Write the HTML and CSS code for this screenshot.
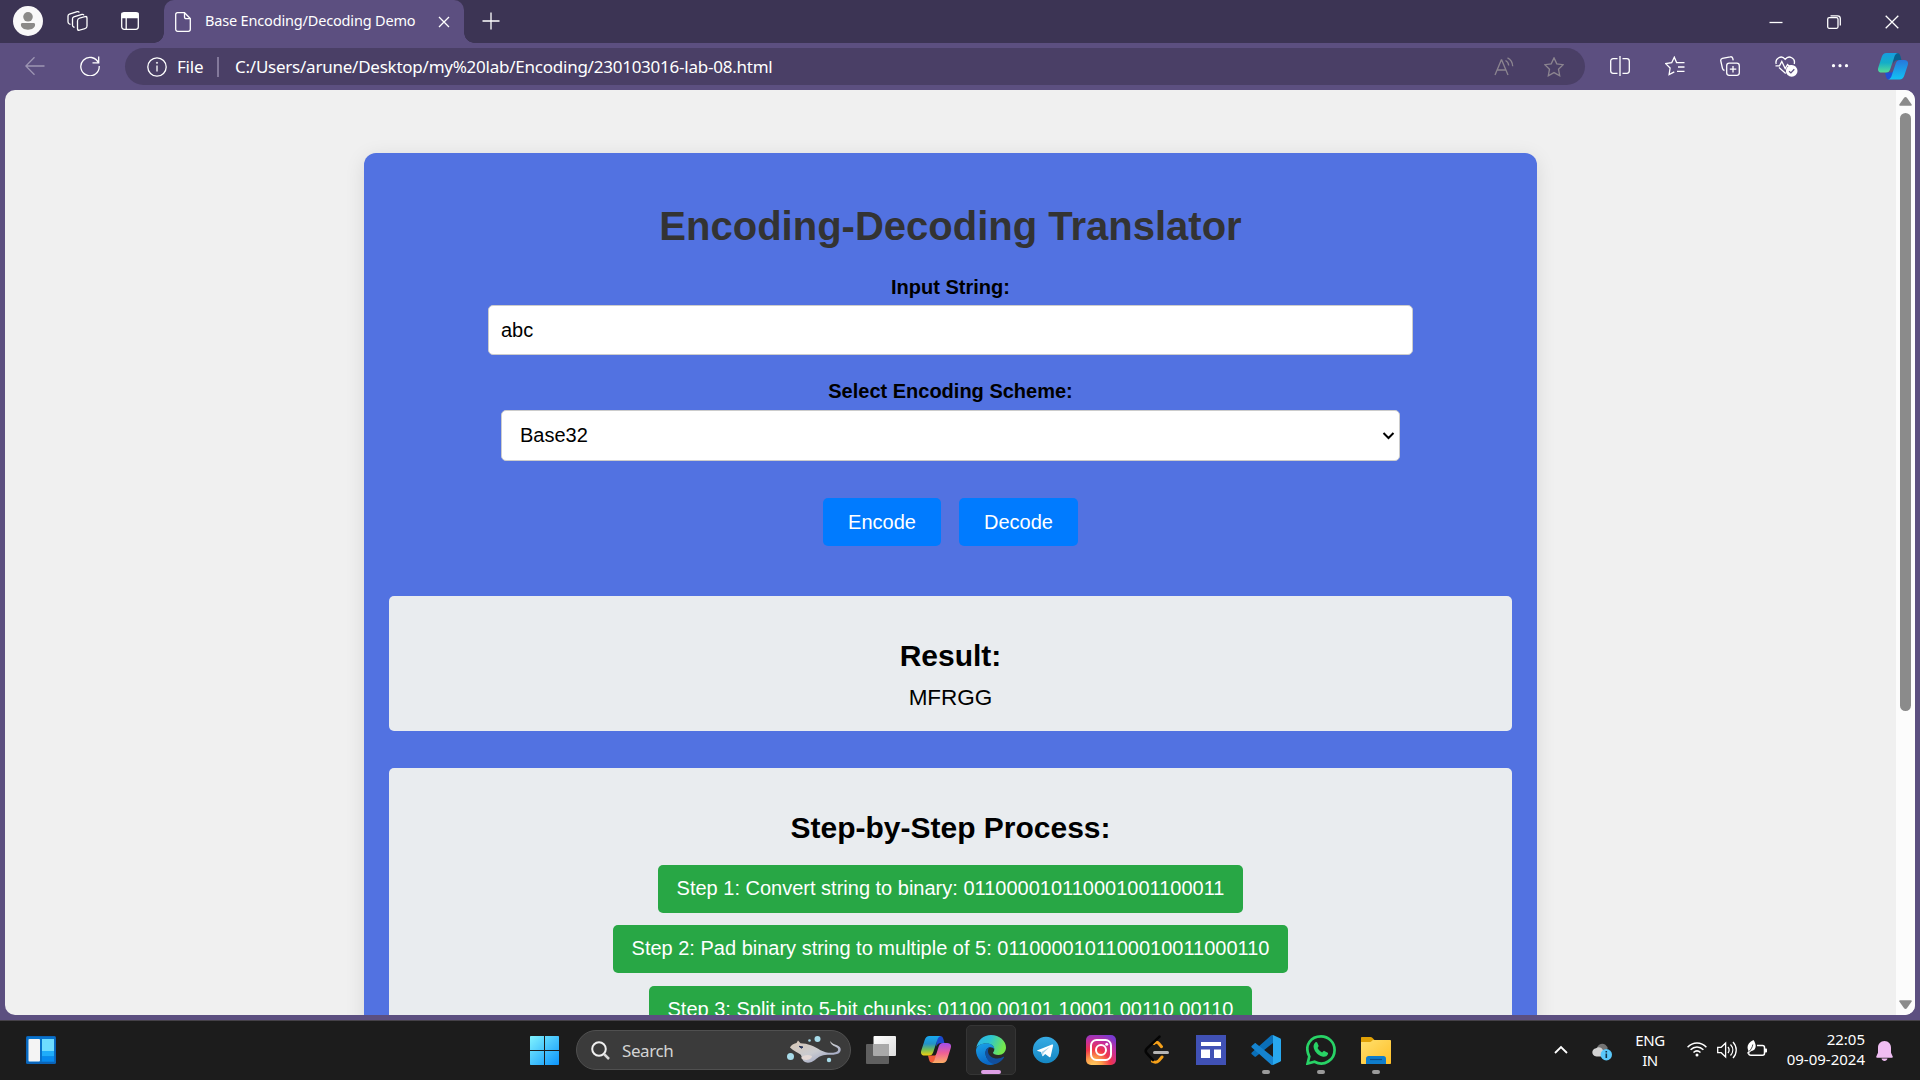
FILE: index.html
```html
<!DOCTYPE html>
<html lang="en">
<head>
<meta charset="utf-8">
<title>Base Encoding/Decoding Demo</title>
<link rel="stylesheet" href="styles.css">
</head>
<body>
<div class="window">
  <header class="tabstrip">
    <div class="strip-tools">
      <svg class="avatar" viewBox="0 0 30 30"><circle cx="15" cy="15" r="15" fill="#f9f8f9"/><circle cx="15" cy="10.8" r="4.8" fill="#8b8988"/><path d="M9.500 17h11c1 0 1.600.6 1.600 1.600 0 3.200-3 5.200-7.100 5.200s-7.100-2-7.100-5.200c0-1 .6-1.600 1.600-1.600z" fill="#8b8988"/></svg>
      <svg class="workspaces line" viewBox="0 0 22 22"><rect x="10.500" y="7.500" width="9.500" height="12" rx="2" transform="skewY(-16) translate(0 4.300)"/><path d="M7.500 17.500l-1-.6c-.8-.4-1-.9-1-1.700V8.700c0-1 .4-1.500 1.300-1.900L15 4.400c1-.3 1.700.1 1.900 1"/><path d="M3.500 14.500l-1.400-.8c-.8-.5-1.100-1-1.100-1.900V6c0-1 .5-1.500 1.400-1.800l7.800-2.500c1-.3 1.700 0 2.100.9"/></svg>
      <svg class="tabactions line" viewBox="0 0 18 18"><rect x=".7" y=".7" width="16.600" height="16.600" rx="2.500"/><path d="M1 1.500h16v4H1z" fill="#fff"/><path d="M5.200 5v12"/></svg>
    </div>
    <div class="tab">
      <svg class="fileicon line" viewBox="0 0 16 20"><path d="M2.500.7h7L15.300 6.600v10.700c0 1.200-.8 2-2 2H2.700c-1.200 0-2-.8-2-2V2.700c0-1.200.6-2 1.800-2z"/><path d="M9.500.9v4.200c0 1 .6 1.600 1.600 1.600h4"/></svg>
      <span class="tab-title">Base Encoding/Decoding Demo</span>
      <svg class="tab-close line" viewBox="0 0 12 12"><path d="M1 1l10 10M11 1L1 11"/></svg>
    </div>
    <svg class="newtab line" viewBox="0 0 18 18"><path d="M9 .5v17M.5 9h17"/></svg>
    <div class="caption">
      <svg viewBox="0 0 14 14" class="line"><path d="M.5 7.500h13"/></svg>
      <svg viewBox="0 0 14 14" class="line"><rect x=".7" y="2.700" width="10.300" height="10.600" rx="1.500"/><path d="M3.500.8h7c1.800 0 2.800 1 2.800 2.800v7"/></svg>
      <svg viewBox="0 0 14 14" class="line"><path d="M.7.7l12.600 12.600M13.300.7L.7 13.300"/></svg>
    </div>
  </header>

  <nav class="toolbar">
    <svg class="back line" viewBox="0 0 20 20"><path d="M19.500 10H1M9.500 1.300L.8 10l8.700 8.700"/></svg>
    <svg class="reload line" viewBox="0 0 20 20"><path d="M18.500 7A9.200 9.200 0 1 0 19.200 10"/><path d="M18.700.5v6.300h-6.200"/></svg>
    <div class="address">
      <svg class="info line" viewBox="0 0 20 20"><circle cx="10" cy="10" r="9.200"/><path d="M10 8.500v6"/><circle cx="10" cy="5.800" r=".6" fill="#fff" stroke-width=".8"/></svg>
      <span class="scheme">File</span>
      <span class="sep"></span>
      <span class="url">C:/Users/arune/Desktop/my%20lab/Encoding/230103016-lab-08.html</span>
      <svg class="read dim" viewBox="0 0 20 20"><path d="M1 18L7.300 3h.4L14 18M3.300 13h8.500"/><path d="M11.500 3.500c2 1 3 2.500 3.200 5M13.500.8c3.500 1.700 5 4.500 5.200 8.500"/></svg>
      <svg class="star dim" viewBox="0 0 20 20"><path d="M10 .9l2.800 5.900 6.400.9-4.700 4.500 1.200 6.500-5.700-3.100-5.700 3.100 1.200-6.500L.8 7.700l6.400-.9z"/></svg>
    </div>
    <div class="tools">
      <svg class="line" viewBox="0 0 20 20"><path d="M7.500 2.700H3.200C1.700 2.700.7 3.700.7 5.200v9.600c0 1.500 1 2.500 2.500 2.500h4.300M12.500 2.700h4.300c1.500 0 2.500 1 2.500 2.500v9.600c0 1.500-1 2.500-2.500 2.500h-4.300M10 0v20"/></svg>
      <svg class="line" viewBox="0 0 20 20"><path d="M11.800 6.600h-.2L9.300 1.200 6.700 6.700.7 7.600l4.400 4.400-1 6.500 5.200-2.700M11.800 6.600h7.700M13 11h6.500M12 15.300h7.500"/></svg>
      <svg class="line" viewBox="0 0 20 20"><rect x="6.700" y="7.200" width="12.600" height="12.100" rx="2.500"/><path d="M13 10v6.500M9.800 13.200h6.500M4.500 14.500c-1.200-.3-1.700-.8-2-2L.8 5c-.3-1.400.2-2.200 1.600-2.600L10.300.8c1.300-.3 2 .2 2.400 1.400l.5 2.200"/></svg>
      <svg class="essentials line" viewBox="0 0 23 21"><path d="M10.700 17.500L4 11.500M1.200 8C-.3 2.500 6.500-1.500 10.200 3.300 14-1.500 20.800 2.500 19.200 8M.5 9.800h4l2.300-4.300 3.400 7 2.300-4 1.300 1.300h3"/><circle cx="16.700" cy="14.900" r="5.800" fill="#fff" stroke="none"/><path d="M14.100 15.200l1.800 1.700 3.400-3.700" stroke="#5c4f80"/></svg>
      <svg class="dots" viewBox="0 0 20 20"><g fill="#fff"><circle cx="3.500" cy="9.700" r="1.600"/><circle cx="10" cy="9.700" r="1.600"/><circle cx="16.500" cy="9.700" r="1.600"/></g></svg>
    </div>
    <svg class="sidepilot" viewBox="0 0 30 27">
      <defs>
        <linearGradient id="cp1" x1="0" y1="0" x2="0" y2="1"><stop offset="0" stop-color="#179ee0"/><stop offset=".5" stop-color="#14aec8"/><stop offset="1" stop-color="#57dd95"/></linearGradient>
        <linearGradient id="cp2" x1="0" y1="0" x2="0" y2="1"><stop offset="0" stop-color="#2877dc"/><stop offset="1" stop-color="#12c3f4"/></linearGradient>
      </defs>
      <path d="M16 0h3c2 0 2.800 1 3.400 3l1 4h-3c-3 0-4.400 1.600-5.400 4z" fill="#08618f"/>
      <path d="M7 19.500h7l3-3-3 7c-.8 2.200-2 3-3.500 3-1.300 0-2-1-2.500-3z" fill="#1e50d8"/>
      <path d="M8.500 0H20c-2.300.4-3 2-3.700 4l-4 12c-.8 2.400-2 3.600-4.300 3.600H4c-3.500 0-4.700-2-3.700-5.200L3.700 4C4.600 1.400 6 0 8.500 0z" fill="url(#cp1)"/>
      <path d="M21.500 26.600H10c2.300-.4 3-2 3.700-4l4-12c.8-2.400 2-3.600 4.300-3.600h4c3.500 0 4.700 2 3.700 5.200l-3.400 10.400c-.9 2.600-2.300 4-4.800 4z" fill="url(#cp2)"/>
    </svg>
  </nav>

  <div class="viewport">
    <main class="page">
      <section class="card">
        <h1>Encoding-Decoding Translator</h1>
        <label for="src">Input String:</label>
        <input id="src" class="field" type="text" value="abc">
        <label class="label-scheme" for="scheme">Select Encoding Scheme:</label>
        <div class="scheme-select">
          <select id="scheme"><option>Base32</option></select>
          <svg viewBox="0 0 13 9"><path d="M1.500 2l5 5 5-5" fill="none" stroke="#000" stroke-width="2"/></svg>
        </div>
        <div class="actions"><button>Encode</button><button>Decode</button></div>
        <div class="panel result">
          <h2>Result:</h2>
          <p>MFRGG</p>
        </div>
        <div class="panel steps">
          <h2>Step-by-Step Process:</h2>
          <div class="step">Step 1: Convert string to binary: 011000010110001001100011</div>
          <div class="step">Step 2: Pad binary string to multiple of 5: 0110000101100010011000110</div>
          <div class="step">Step 3: Split into 5-bit chunks: 01100 00101 10001 00110 00110</div>
        </div>
      </section>
    </main>
    <aside class="scrollbar">
      <svg viewBox="0 0 13 9"><path d="M6.500 0c.6 0 1 .3 1.400.8l4.600 6.400c.6.9.3 1.600-.7 1.600H1.200c-1 0-1.300-.7-.7-1.600L5.100.8C5.500.3 5.900 0 6.500 0z" fill="#8b8b8b"/></svg>
      <span class="thumb"></span>
      <svg class="down" viewBox="0 0 13 9"><path d="M6.500 9c.6 0 1-.3 1.400-.8l4.600-6.400C13.100.9 12.800.2 11.800.2H1.200C.2.200-.1.900.5 1.800l4.600 6.400c.4.500.8.8 1.400.8z" fill="#8b8b8b"/></svg>
    </aside>
  </div>
</div>

<footer class="taskbar">
  <svg class="widgets" viewBox="0 0 30 28">
    <rect width="30" height="28" rx="1.500" fill="#0a64b9"/><rect x="1.500" y="1" width="27" height="25" fill="#0873cc"/>
    <rect x="2.500" y="3" width="11.500" height="22.500" rx="1" fill="#f4f4f4"/><rect x="16" y="3" width="12" height="12" fill="#6edcff"/><rect x="16" y="15" width="12" height="5.500" fill="#1fadfa"/><rect x="16" y="20.500" width="12" height="5" fill="#078aee"/>
  </svg>
  <svg class="start" viewBox="0 0 29 29">
    <defs><linearGradient id="win" x1="0" y1="0" x2="29" y2="29" gradientUnits="userSpaceOnUse"><stop offset="0" stop-color="#80f3fe"/><stop offset="1" stop-color="#0c94fb"/></linearGradient></defs>
    <path d="M1 0h13v14H0V1c0-.6.4-1 1-1zM15 0h13c.6 0 1 .4 1 1v13H15zM0 15h14v14H1c-.6 0-1-.4-1-1zM15 15h14v13c0 .6-.4 1-1 1H15z" fill="url(#win)"/>
  </svg>
  <div class="search">
    <svg class="lens" viewBox="0 0 19 19"><circle cx="8" cy="8" r="6.800" fill="none" stroke="#f0f0f0" stroke-width="2"/><path d="M13 13l5 5" stroke="#d8d8d8" stroke-width="2.500"/></svg>
    <span>Search</span>
    <svg class="critter" viewBox="0 0 56 28">
      <defs><linearGradient id="ray" x1="0" y1="0" x2="1" y2="1"><stop offset="0" stop-color="#d9c7b4"/><stop offset=".5" stop-color="#c9cbd0"/><stop offset="1" stop-color="#8992be"/></linearGradient></defs>
      <path d="M3 11.500c1-2.500 3-3.500 6.500-4.500l1.500-2.500 2.500 2.800c7 .2 14 3 20 7 5 2.500 10 3.200 15 2 3.500-1 3.700-4 0-5.500-3-1-5-3-5.500-5.800 2 2.500 4 3.300 7 4.300 5.500 2 4.500 7.500 0 8.800-5 1.300-9 .5-12 1-5 .8-7 2.500-10 4.900-3.500 2.500-8 4-11.500 1-2-2-1.500-5-3-6.500-3-2-7-3.500-10.500-7z" fill="url(#ray)"/>
      <path d="M14 22c2-3 7-4 11-2 0 3-6 6-11 2z" fill="#e4d9d5"/><path d="M12 10.300l4 .7-1.500 1.200z" fill="#26345a" stroke="#26345a"/>
      <g fill="#a8dcea"><circle cx="3.500" cy="20.500" r="3.500"/><circle cx="30.500" cy="3" r="3"/><circle cx="42" cy="24" r="2.200"/><circle cx="22.500" cy="4.500" r="1.300"/></g>
    </svg>
  </div>
  <div class="apps">
    <div class="app"><svg viewBox="0 0 30 30"><defs><linearGradient id="tvw" x1="0" y1="0" x2="1" y2="1"><stop offset="0" stop-color="#fff"/><stop offset="1" stop-color="#dcdcdc"/></linearGradient></defs><rect x="0" y="9" width="23" height="20" rx="1" fill="#5f5f5f"/><rect x="7.500" y="1" width="22.500" height="20" rx="1" fill="url(#tvw)"/><path d="M7.500 9H23v12H7.500z" fill="#a9a9a9"/></svg></div>
    <div class="app"><svg viewBox="0 0 30 30">
      <defs><linearGradient id="ca" x1="0" y1="0" x2="0" y2="1"><stop offset="0" stop-color="#18a9f1"/><stop offset=".4" stop-color="#2491c8"/><stop offset=".7" stop-color="#73bd55"/><stop offset="1" stop-color="#f5cf0d"/></linearGradient><linearGradient id="cb" x1="0" y1="0" x2="0" y2="1"><stop offset="0" stop-color="#a34dec"/><stop offset=".5" stop-color="#ee5f95"/><stop offset="1" stop-color="#fcae63"/></linearGradient></defs>
      <path d="M16 1h3c2 0 2.800 1 3.400 3l1 4h-3c-3 0-4.400 1.600-5.400 4z" fill="#1b49ce"/><path d="M7 20.500h7l3-3-3 7c-.8 2.200-2 3-3.500 3-1.300 0-2-1-2.500-3z" fill="#f45c38"/>
      <path d="M8.500 1H20c-2.300.4-3 2-3.700 4l-4 12c-.8 2.400-2 3.600-4.300 3.600H4c-3.500 0-4.700-2-3.700-5.200L3.700 5C4.600 2.400 6 1 8.500 1z" fill="url(#ca)"/><path d="M21.500 28H10c2.300-.4 3-2 3.700-4l4-12.400c.8-2.400 2-3.600 4.300-3.600h4c3.500 0 4.700 2 3.700 5.200L26.300 24c-.9 2.600-2.300 4-4.800 4z" fill="url(#cb)"/></svg></div>
    <div class="app active"><svg viewBox="0 0 30 30">
      <defs><linearGradient id="ea" x1="0" y1="0" x2="1" y2=".3"><stop offset="0" stop-color="#2cb1ee"/><stop offset=".5" stop-color="#2dc5cf"/><stop offset="1" stop-color="#74e84d"/></linearGradient><linearGradient id="eb" x1="0" y1="0" x2=".3" y2="1"><stop offset="0" stop-color="#1aa3e8"/><stop offset="1" stop-color="#0a67c6"/></linearGradient></defs>
      <path d="M.3 13C1.500 5.200 7.600 0 15 0c8.500 0 15 6 15 12.500 0 4.500-3.300 7.500-7.500 7.500-3.500 0-5.500-1.300-5.500-2.300 0-.6 1.300-1.200 1.300-3.500 0-3.400-3.300-5.800-7.800-5.800C6 8.400 1.800 10 .3 13z" fill="url(#ea)"/>
      <path d="M10.500 8.300c4.500 0 7.800 2.600 7.800 5.900-.6-1.300-2-2-3.800-2-3 0-5 2.600-5 6 0 6 6 10.300 12 9.300-2 1.600-4.300 2.500-7 2.500C6.500 30 0 23.300 0 15.500 0 11.500 4.500 8.300 10.500 8.300z" fill="url(#eb)"/>
      <path d="M9.500 18.200c-.3-3 1.500-5.700 4-6-1 1-1.500 2.400-1.500 4 0 4.400 4.500 7.300 9.300 7.300 2.400 0 4.300-.7 6-1.700.7-.4 1.100.1.700.8C25.800 26 22 29 18.500 29c-5 0-8.600-5.500-9-10.800z" fill="#114f9e"/></svg></div>
    <div class="app"><svg viewBox="0 0 30 30"><defs><linearGradient id="tg" x1="0" y1="0" x2="0" y2="1"><stop offset="0" stop-color="#37abe4"/><stop offset="1" stop-color="#1587c3"/></linearGradient></defs><circle cx="15" cy="15" r="13.200" fill="url(#tg)"/><path d="M6.500 15.300L21 9.500c.8-.3 1.300.1 1.100 1l-2.400 10.800c-.2.900-.8 1.100-1.500.6l-4-3-2 2c-.4.400-.9.300-1-.3L10 17l-3.400-1c-.7-.2-.7-.5-.1-.7z" fill="#fff"/><path d="M10.500 17l8.500-5.300-6.500 6.300-.6 3z" fill="#a9d2e9"/></svg></div>
    <div class="app"><svg viewBox="0 0 30 30"><defs><radialGradient id="ig" cx=".25" cy="1.050" r="1.150"><stop offset="0" stop-color="#ffd365"/><stop offset=".25" stop-color="#fda04a"/><stop offset=".5" stop-color="#f0354b"/><stop offset=".75" stop-color="#c72f9b"/><stop offset="1" stop-color="#7a3ad0"/></radialGradient></defs><rect width="30" height="30" rx="5" fill="url(#ig)"/><rect x="5" y="5" width="20" height="20" rx="5.500" fill="none" stroke="#fff" stroke-width="2"/><circle cx="15" cy="15" r="5" fill="none" stroke="#fff" stroke-width="2"/><circle cx="20.700" cy="9.300" r="1.500" fill="#fff"/></svg></div>
    <div class="app"><svg viewBox="0 0 30 30" fill="none" stroke-width="3" stroke-linecap="round"><path d="M13 8.500c2-2 3.500-1.500 5 .2l2.500 3M21 22l-3 3.500c-2 2-4.500 2-6.500.8" stroke="#f6a11a"/><path d="M18.500 1.700L6 13.300c-1.700 1.700-1.700 3.600 0 5.300l6 6.500" stroke="#050505" stroke-width="2.500"/><path d="M13.500 17.500h13" stroke="#b5b5b5"/></svg></div>
    <div class="app"><svg viewBox="0 0 30 30"><path d="M0 0h30v30H0z" fill="#4051b5"/><g fill="#fff"><path d="M5 7h20v4H5zM5 14.500h9v8.500H5zM18 14.500H25V23h-7z"/></g></svg></div>
    <div class="app run"><svg viewBox="0 0 30 30"><path d="M22 0l7 3.300c.6.300 1 .8 1 1.500v20.400c0 .7-.4 1.200-1 1.500L22 30z" fill="#28a8ef"/><path d="M22 0v8L5 21.600c-.5.400-1 .4-1.500 0L.8 19.300c-.6-.5-.6-1.200 0-1.700L20 .6c.6-.5 1.200-.7 2-.6z" fill="#0a6fb8"/><path d="M22 30v-8L5 8.400c-.5-.4-1-.4-1.500 0L.8 10.700c-.6.5-.6 1.200 0 1.700L20 29.400c.6.500 1.200.7 2 .6z" fill="#1583cf"/></svg></div>
    <div class="app run"><svg viewBox="0 0 30 30"><path d="M1.600 28.500l1.700-7C-2.500 9.500 5.500 1.400 15 1.400c7.700 0 13.600 6 13.600 13.500 0 10-10.500 17-20 11.800z" fill="none" stroke="#28d366" stroke-width="2.700"/><path d="M9.300 7.500c.6-.6 1.600-.5 2 .3l1.300 3c.3.700-.8 1.500-1 2.200.8 1.900 2.500 3.500 4.500 4.400.7-.2 1.400-1.800 2.200-1.500l3 1.500c.9.400.9.800.6 1.900-.8 2.300-3.500 2.900-5.700 2.200-4-1.200-7.200-4.300-8.300-8-.7-2.400-.3-4.500 1.400-6z" fill="#28d366"/></svg></div>
    <div class="app run"><svg viewBox="0 0 30 30"><defs><linearGradient id="fo" x1="0" y1="0" x2="1" y2="1"><stop offset="0" stop-color="#ffe06e"/><stop offset="1" stop-color="#ffbf27"/></linearGradient></defs><path d="M1 2h8.500c.8 0 1.300.3 1.800.8L13.500 5H29v6H0V3c0-.6.4-1 1-1z" fill="#e0a106"/><path d="M12.500 5H29c.6 0 1 .4 1 1v22c0 .6-.4 1-1 1H1c-.6 0-1-.4-1-1V7h9c1.500 0 2-2 3.500-2z" fill="url(#fo)"/><path d="M7.500 21h15c1.400 0 2.500 1 2.500 2.500V29H5v-5.500C5 22 6.100 21 7.500 21z" fill="#0f7dcb"/><path d="M9 24.500h12" stroke="#0b4f8d" stroke-width="1.200"/></svg></div>
  </div>
  <div class="tray">
    <svg class="chev" viewBox="0 0 14 9"><path d="M1 8l6-6 6 6" fill="none" stroke="#fff" stroke-width="1.800"/></svg>
    <svg class="cloud" viewBox="0 0 20 18"><path d="M5 4.500C7-.5 13.500-1 15.800 5L12 11z" fill="#747474"/><path d="M4.500 13.500C-1 13-1 6 4 5.300c2-2 5.500-1.300 6.500 1.200L16 11v2.500z" fill="#d2d2d2"/><circle cx="14.300" cy="11.800" r="5.700" fill="#5ac8fa"/><path d="M14.300 10.500V15M14.300 8v1.500" stroke="#12344a" stroke-width="1.600"/></svg>
    <div class="lang">ENG<br>IN</div>
    <svg class="wifi" viewBox="0 0 20 16" fill="none" stroke="#fff" stroke-width="1.500"><path d="M.6 6.200c5.300-5.700 13.500-5.700 18.800 0M3.600 8.800c3.700-3.900 9.100-3.900 12.800 0M6.500 11.500c2.200-2 4.800-2 7 0"/><circle cx="10" cy="14" r="1.500" fill="#fff" stroke="none"/></svg>
    <svg class="sound" viewBox="0 0 20 18" fill="none" stroke="#fff" stroke-width="1.300"><path d="M.7 6.300h3.500L8.600 2v14l-4.400-4.300H.7zM11 6c1.500 2 1.500 4 0 6M13.500 3.500c3 3.300 3 7.700 0 11M16 1c4.300 4.600 4.300 11.400 0 16"/></svg>
    <svg class="battery" viewBox="0 0 20 18"><path d="M10 5.500h5.500c1.400 0 2 .6 2 2v5.800c0 1.400-.6 2-2 2H4c-1.400 0-2.300-.6-2.300-2" fill="none" stroke="#fff" stroke-width="1.500"/><path d="M18 8.500h1c.6 0 1 .4 1 1v2c0 .6-.4 1-1 1h-1z" fill="#fff"/><path d="M6.500 0c3.500 5 3 10.500-2.500 11.200L1 14l-.9-.9L1.500 11C-.8 6 1 3 6.500 0z" fill="#fff"/><path d="M5.800 4.500c-.3 2.500-1.800 5-3.800 7" stroke="#1c1c1c" stroke-width=".8" fill="none"/></svg>
    <div class="clock">22:05<br>09-09-2024</div>
    <svg class="bell" viewBox="0 0 17 20"><path d="M8.500 0c4 0 6.500 3 6.500 6.700v5l1.700 3.700c.3.700 0 1.300-.8 1.300H1.100c-.8 0-1.100-.6-.8-1.300L2 11.700v-5C2 3 4.500 0 8.500 0zM5.500 17.500h6c-.5 3.200-5.500 3.200-6 0z" fill="#efbdf2"/></svg>
  </div>
</footer>
</body>
</html>
```
FILE: styles.css
```css
* { box-sizing: border-box; }
body {
  margin: 0; width: 1920px; height: 1080px; overflow: hidden;
  display: flex; flex-direction: column;
  font-family: "Noto Sans", sans-serif; color: #fff; background: #1c1c1c;
}
svg { display: block; flex: none; }
.line { fill: none; stroke: #fff; stroke-width: 1.3; }

.window { height: 1020px; display: flex; flex-direction: column; background: #5c4f80; }

/* tab strip */
.tabstrip { height: 43px; flex: none; display: flex; background: #3c3454; }
.strip-tools { width: 164px; display: flex; padding-left: 13px; }
.avatar { width: 30px; height: 30px; margin-top: 6px; }
.workspaces { width: 22px; height: 22px; margin: 10px 0 0 24px; }
.tabactions { width: 18px; height: 18px; margin: 12px 0 0 32px; }
.tab {
  position: relative; width: 300px; display: flex; align-items: center;
  padding: 0 0 0 11px; background: #5c4f80; border-radius: 10px 10px 0 0;
}
.tab::before, .tab::after { content: ""; position: absolute; bottom: 0; width: 10px; height: 10px; }
.tab::before { left: -10px; background: radial-gradient(circle at 0 0, transparent 9.5px, #5c4f80 10px); }
.tab::after { right: -10px; background: radial-gradient(circle at 100% 0, transparent 9.5px, #5c4f80 10px); }
.fileicon { width: 16px; height: 20px; }
.tab-title { width: 234px; margin-left: 14px; font-size: 14.5px; letter-spacing: -.17px; white-space: nowrap; line-height: 20px; padding-bottom: 3px; }
.tab-close { width: 12px; height: 12px; margin-left: -1px; }
.newtab { width: 18px; height: 18px; margin: 12px 0 0 18px; }
.caption { margin-left: auto; display: flex; align-items: center; gap: 44px; padding-right: 21.5px; }
.caption svg { width: 14px; height: 14px; }

/* toolbar */
.toolbar { height: 47px; flex: none; display: flex; align-items: flex-start; padding: 5px 12px 0 25px; }
.back { width: 20px; height: 20px; margin-top: 8px; opacity: .4; }
.reload { width: 20px; height: 20px; margin: 8px 0 0 35px; }
.address { width: 1460px; height: 37px; margin-left: 25px; border-radius: 19px; background: #4a3f66; display: flex; align-items: center; padding: 0 21px 0 22px; font-size: 17px; }
.info { width: 20px; height: 20px; margin-top: 1px; }
.scheme { width: 38px; margin-left: 10px; letter-spacing: -.2px; }
.sep { width: 2px; height: 20px; margin-left: 2px; background: #83799b; }
.url { margin-left: 16px; letter-spacing: -.24px; white-space: nowrap; }
.dim { width: 20px; height: 20px; fill: none; stroke: #8c8590; stroke-width: 1.3; }
.read { margin-left: auto; }
.star { margin-left: 30px; }
.tools { display: flex; gap: 35px; margin: 8px 0 0 24.5px; }
.tools svg { width: 20px; height: 20px; }
.tools .essentials { width: 23px; height: 21px; }
.tools .dots { margin-left: -3px; }
.sidepilot { width: 30px; height: 27px; margin: 5px 0 0 auto; }

/* document area */
.viewport { height: 925px; margin: 0 5px; display: flex; background: #f0f0f0; border-radius: 10px; overflow: hidden; }
.page { width: 1891px; font-family: "Liberation Sans", Arial, sans-serif; color: #000; }
.card {
  width: 1173px; height: 1100px; margin: 63px 0 0 359px; padding: 25px;
  background: #5272e1; border-radius: 12px; box-shadow: 0 4px 20px rgba(0, 0, 0, .1);
  display: flex; flex-direction: column; align-items: center; font-size: 20px;
}
.card h1 { margin: 25px 0 27px; font-size: 40px; line-height: 46px; color: #333; }
.card label { font-weight: bold; line-height: 23px; }
.field { width: 925px; height: 50px; margin-top: 6px; padding: 0 12px; border: 1px solid #ccc; border-radius: 5px; background: #fff; font: inherit; color: #000; }
.card .label-scheme { margin-top: 25px; }
.scheme-select { width: 899px; height: 51px; margin-top: 7px; padding: 0 4px 0 18px; display: flex; align-items: center; background: #fff; border: 1px solid #ccc; border-radius: 5px; }
.scheme-select select { flex: 1; appearance: none; border: 0; padding: 0 0 2px; background: none; font: inherit; color: #000; }
.scheme-select svg { width: 13px; height: 9px; }
.actions { display: flex; gap: 18px; margin-top: 37px; }
.actions button { width: 118px; height: 48px; border: 0; border-radius: 5px; background: #007bff; color: #fff; font: inherit; padding: 0; }
.actions button:last-child { width: 119px; }
.panel { width: 1123px; background: #e9ecef; border-radius: 5px; display: flex; flex-direction: column; align-items: center; padding-top: 43px; }
.panel h2 { margin: 0; font-size: 30px; line-height: 34px; }
.result { height: 135px; margin-top: 50px; }
.result p { margin: 12px 0 0; font-size: 22.5px; line-height: 26px; }
.steps { height: 400px; margin-top: 37px; }
.step { height: 48px; margin-top: 12px; padding: 0 18.75px; background: #28a745; color: #fff; border-radius: 5px; line-height: 47px; white-space: nowrap; }
.steps h2 + .step { margin-top: 20px; }
.step:last-child { margin-top: 13px; }

.scrollbar { width: 19px; background: #fcfcfc; display: flex; flex-direction: column; align-items: center; padding: 7px 0 6px; }
.scrollbar svg { width: 13px; height: 9px; }
.thumb { width: 11px; height: 598px; margin-top: 7px; border-radius: 6px; background: #8b8b8b; }
.scrollbar .down { margin-top: auto; }

/* taskbar */
.taskbar { height: 60px; border-top: 1px solid #454148; background: #1c1c1c; display: flex; align-items: flex-start; }
.widgets { width: 30px; height: 28px; margin: 15px 0 0 26px; }
.start { width: 29px; height: 29px; margin: 15px 0 0 474px; }
.search { width: 275px; height: 40px; margin: 9px 0 0 17px; border: 1px solid #505050; border-radius: 20px; background: #3b3b3b; display: flex; align-items: center; padding: 0 7px 0 14px; font-size: 17px; color: #d4d4d4; }
.lens { width: 19px; height: 19px; }
.search span { margin-left: 12px; letter-spacing: -.4px; }
.critter { width: 56px; height: 28px; margin-left: auto; }
.apps { display: flex; gap: 5px; margin: 4px 0 0 5px; }
.app { width: 50px; height: 50px; padding-top: 10px; display: flex; flex-direction: column; align-items: center; border-radius: 5px; }
.app svg { width: 30px; height: 30px; }
.app.active { background: #292929; border: 1px solid #353535; padding-top: 9px; }
.app.active::after, .app.run::after { content: ""; width: 8px; height: 4px; margin-top: 5px; border-radius: 2px; background: #9a9a9a; }
.app.active::after { width: 20px; background: #dd9fe5; }
.tray { margin-left: auto; height: 59px; display: flex; align-items: flex-start; font-size: 15px; line-height: 20px; padding-right: 27px; }
.chev { width: 14px; height: 9px; margin-top: 24px; }
.cloud { width: 20px; height: 18px; margin: 22px 0 0 24px; }
.lang { width: 44px; margin: 9px 0 0 16px; text-align: center; letter-spacing: -.4px; }
.wifi { width: 20px; height: 16px; margin: 20px 0 0 15px; }
.sound { width: 20px; height: 18px; margin: 20px 0 0 10px; }
.battery { width: 20px; height: 18px; margin: 19px 0 0 10px; }
.clock { width: 90px; margin: 8px 0 0 8px; text-align: right; letter-spacing: 0; }
.bell { width: 17px; height: 20px; margin: 20px 0 0 11px; }
```
